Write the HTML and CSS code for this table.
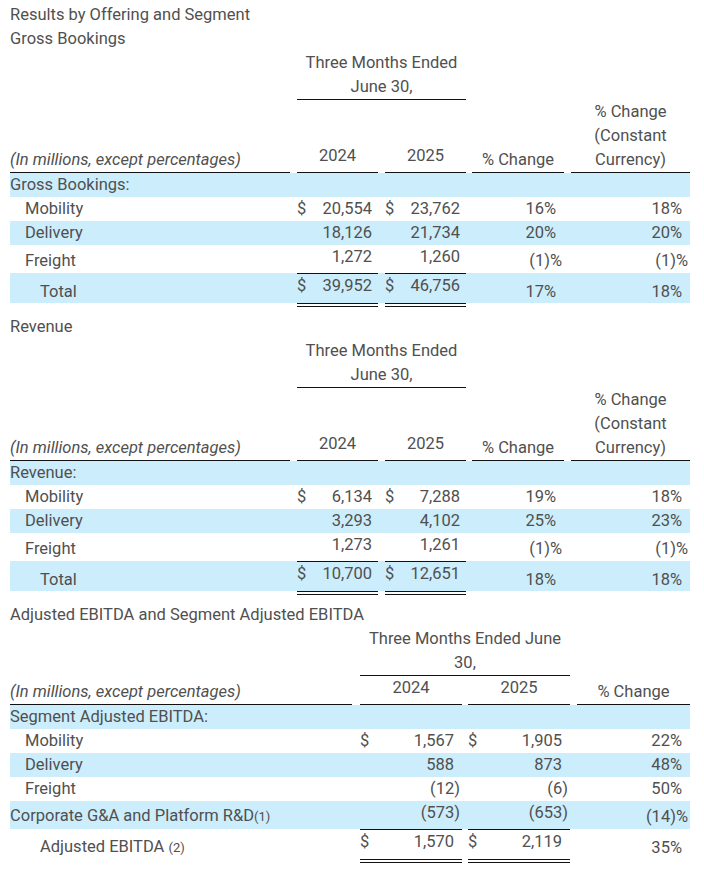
FILE: index.html
```html
<!DOCTYPE html>
<html lang="en">
<head>
<meta charset="utf-8">
<title>Results by Offering and Segment</title>
<link rel="stylesheet" href="styles.css">
</head>
<body>
<div class="page">

<section class="sec">
  <p class="ttl">Results by Offering and Segment</p>
  <p class="ttl">Gross Bookings</p>
  <table class="fin four">
    <colgroup><col class="c-lab"><col class="c-g"><col class="c-y"><col class="c-g"><col class="c-y"><col class="c-g2"><col class="c-p"><col class="c-g"><col class="c-pc"></colgroup>
    <tr class="hA"><td></td><td></td><td colspan="3" class="period">Three Months Ended<br>June 30,</td><td></td><td></td><td></td><td></td></tr>
    <tr class="hB"><td class="lab it ul bot">(In millions, except percentages)</td><td></td><td class="yr ul bot">2024</td><td></td><td class="yr ul bot">2025</td><td></td><td class="ph ul bot">% Change</td><td></td><td class="ph ul bot">% Change<br>(Constant<br>Currency)</td></tr>
    <tr class="r blue"><td class="lab">Gross Bookings:</td><td></td><td></td><td></td><td></td><td></td><td></td><td></td><td></td></tr>
    <tr class="r"><td class="lab ind1">Mobility</td><td></td><td class="num"><span class="cur">$</span>20,554</td><td></td><td class="num"><span class="cur">$</span>23,762</td><td></td><td class="pct">16%</td><td></td><td class="pct">18%</td></tr>
    <tr class="r blue"><td class="lab ind1">Delivery</td><td></td><td class="num">18,126</td><td></td><td class="num">21,734</td><td></td><td class="pct">20%</td><td></td><td class="pct">20%</td></tr>
    <tr class="r28"><td class="lab ind1 bot">Freight</td><td></td><td class="num top">1,272</td><td></td><td class="num top">1,260</td><td></td><td class="pct bot"><span class="hang">(1)%</span></td><td></td><td class="pct bot"><span class="hang">(1)%</span></td></tr>
    <tr class="rt blue"><td class="lab ind2 bot">Total</td><td></td><td class="num top tot"><span class="cur">$</span>39,952</td><td></td><td class="num top tot"><span class="cur">$</span>46,756</td><td></td><td class="pct bot">17%</td><td></td><td class="pct bot">18%</td></tr>
  </table>
</section>

<section class="sec">
  <p class="ttl">Revenue</p>
  <table class="fin four">
    <colgroup><col class="c-lab"><col class="c-g"><col class="c-y"><col class="c-g"><col class="c-y"><col class="c-g2"><col class="c-p"><col class="c-g"><col class="c-pc"></colgroup>
    <tr class="hA"><td></td><td></td><td colspan="3" class="period">Three Months Ended<br>June 30,</td><td></td><td></td><td></td><td></td></tr>
    <tr class="hB"><td class="lab it ul bot">(In millions, except percentages)</td><td></td><td class="yr ul bot">2024</td><td></td><td class="yr ul bot">2025</td><td></td><td class="ph ul bot">% Change</td><td></td><td class="ph ul bot">% Change<br>(Constant<br>Currency)</td></tr>
    <tr class="r blue"><td class="lab">Revenue:</td><td></td><td></td><td></td><td></td><td></td><td></td><td></td><td></td></tr>
    <tr class="r"><td class="lab ind1">Mobility</td><td></td><td class="num"><span class="cur">$</span>6,134</td><td></td><td class="num"><span class="cur">$</span>7,288</td><td></td><td class="pct">19%</td><td></td><td class="pct">18%</td></tr>
    <tr class="r blue"><td class="lab ind1">Delivery</td><td></td><td class="num">3,293</td><td></td><td class="num">4,102</td><td></td><td class="pct">25%</td><td></td><td class="pct">23%</td></tr>
    <tr class="r28"><td class="lab ind1 bot">Freight</td><td></td><td class="num top">1,273</td><td></td><td class="num top">1,261</td><td></td><td class="pct bot"><span class="hang">(1)%</span></td><td></td><td class="pct bot"><span class="hang">(1)%</span></td></tr>
    <tr class="rt blue"><td class="lab ind2 bot">Total</td><td></td><td class="num top tot"><span class="cur">$</span>10,700</td><td></td><td class="num top tot"><span class="cur">$</span>12,651</td><td></td><td class="pct bot">18%</td><td></td><td class="pct bot">18%</td></tr>
  </table>
</section>

<section class="sec">
  <p class="ttl">Adjusted EBITDA and Segment Adjusted EBITDA</p>
  <table class="fin three">
    <colgroup><col class="d-lab"><col class="d-g1"><col class="d-y"><col class="d-g2"><col class="d-y"><col class="d-g3"><col class="d-p"></colgroup>
    <tr class="hA"><td></td><td></td><td colspan="3" class="period">Three Months Ended June<br>30,</td><td></td><td></td></tr>
    <tr class="hC"><td class="lab it ul bot">(In millions, except percentages)</td><td></td><td class="yr ul top">2024</td><td></td><td class="yr ul top">2025</td><td></td><td class="ph ul bot">% Change</td></tr>
    <tr class="r blue"><td class="lab">Segment Adjusted EBITDA:</td><td></td><td></td><td></td><td></td><td></td><td></td></tr>
    <tr class="r"><td class="lab ind1">Mobility</td><td></td><td class="num n8"><span class="cur">$</span>1,567</td><td></td><td class="num n8"><span class="cur">$</span>1,905</td><td></td><td class="pct">22%</td></tr>
    <tr class="r blue"><td class="lab ind1">Delivery</td><td></td><td class="num n8">588</td><td></td><td class="num n8">873</td><td></td><td class="pct">48%</td></tr>
    <tr class="r"><td class="lab ind1">Freight</td><td></td><td class="num n8">(12<span class="rp">)</span></td><td></td><td class="num n8">(6<span class="rp">)</span></td><td></td><td class="pct">50%</td></tr>
    <tr class="r28 blue"><td class="lab bot">Corporate G&amp;A and Platform R&amp;D<span class="fn">(1)</span></td><td></td><td class="num n8 top">(573<span class="rp">)</span></td><td></td><td class="num n8 top">(653<span class="rp">)</span></td><td></td><td class="pct bot"><span class="hang">(14)%</span></td></tr>
    <tr class="rt"><td class="lab ind2 bot">Adjusted EBITDA <span class="fn">(2)</span></td><td></td><td class="num n8 top tot"><span class="cur">$</span>1,570</td><td></td><td class="num n8 top tot"><span class="cur">$</span>2,119</td><td></td><td class="pct bot">35%</td></tr>
  </table>
</section>

</div>
</body>
</html>
```

FILE: styles.css
```css
html, body {
  margin: 0;
  padding: 0;
  background: #ffffff;
}

body {
  font-family: Roboto, "Liberation Sans", Arial, sans-serif;
  font-size: 16.5px;
  line-height: 24px;
  color: #505050;
}

.page {
  padding: 3px 14px 0 10px;
}

.sec {
  margin: 0 0 12px 0;
}

.ttl {
  margin: 0;
  line-height: 24px;
}

.fin {
  width: 680px;
  table-layout: fixed;
  border-collapse: separate;
  border-spacing: 0;
}

.fin td {
  padding: 0;
  line-height: 24px;
  white-space: nowrap;
}

/* four-column tables */
.c-lab { width: 280px; }
.c-g   { width: 7px; }
.c-g2  { width: 6px; }
.c-y   { width: 81px; }
.c-p   { width: 92px; }
.c-pc  { width: 119px; }

/* EBITDA table */
.d-lab { width: 342px; }
.d-g1  { width: 8px; }
.d-g2  { width: 6px; }
.d-g3  { width: 7px; }
.d-y   { width: 102px; }
.d-p   { width: 113px; }

.blue { background: #ccedfb; }

.hA td { height: 48px; vertical-align: bottom; }
.period {
  text-align: center;
  border-bottom: 1px solid #111;
}

.hB td { vertical-align: bottom; }
.hC td { height: 28px; }

.ul { border-bottom: 1px solid #111; }
.top { vertical-align: top; }
.bot { vertical-align: bottom; }

.it { font-style: italic; }

.yr { text-align: center; }
.hB .yr { padding-bottom: 4px; }
.ph { text-align: center; }

.r  { height: 24px; }
.r28 { height: 28px; }
.rt { height: 30px; }
.rt .bot { line-height: 22px; }

.lab { text-align: left; }
.ind1 { padding-left: 15px !important; }
.ind2 { padding-left: 30px !important; }

.num {
  text-align: right;
  padding-right: 6px !important;
}
.num.n8 { padding-right: 8px !important; }

.cur { float: left; }

.rp { margin-right: -6px; }

.pct {
  text-align: right;
  padding-right: 8px !important;
}
.hang { margin-right: -6px; }

.tot {
  border-top: 1px solid #111;
  box-shadow: 0 1px 0 #111, 0 3px 0 #fff, 0 4px 0 #111;
}

.fn {
  font-size: 13px;
}
```
